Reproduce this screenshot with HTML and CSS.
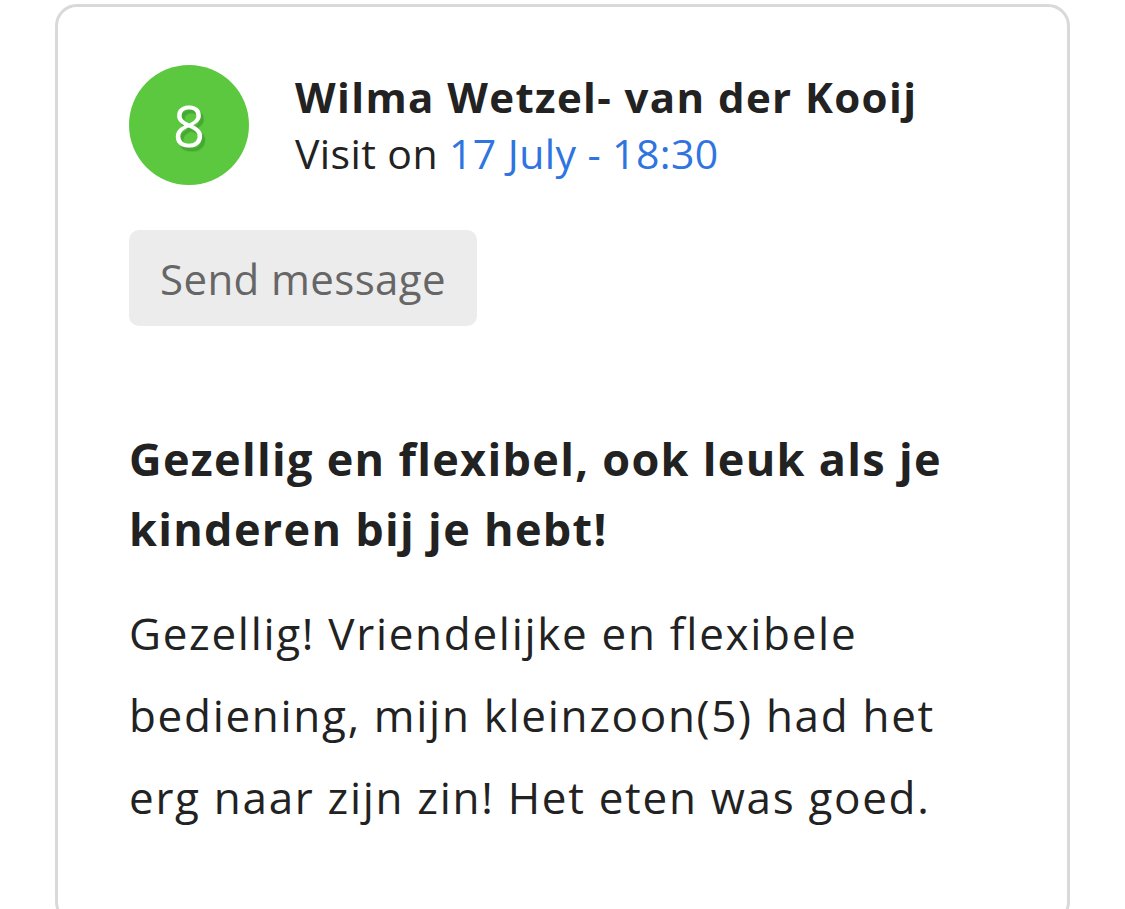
FILE: index.html
```html
<!DOCTYPE html>
<html lang="en">
<head>
    <meta charset="UTF-8">
    <meta name="viewport" content="width=device-width, initial-scale=1.0">
    <title>Review</title>
    <link rel="stylesheet" href="styles.css">
</head>
<body>
    <div class="review-card">
        <!-- Reviewer header -->
        <div class="review-header">
            <div class="score">8</div>
            <div class="reviewer">
                <div class="reviewer-name">Wilma Wetzel- van der Kooij</div>
                <div class="visit">Visit on <span class="visit-date">17 July - 18:30</span></div>
            </div>
        </div>

        <button class="message-btn">Send message</button>

        <h2 class="review-title">Gezellig en flexibel, ook leuk als je kinderen bij je hebt!</h2>
        <p class="review-text">Gezellig! Vriendelijke en flexibele bediening, mijn kleinzoon(5) had het erg naar zijn zin! Het eten was goed.</p>
    </div>
</body>
</html>
```

FILE: styles.css
```css
body {
    margin: 0;
    background-color: #fff;
    font-family: 'Open Sans', sans-serif;
    color: #222;
}
.review-card {
    width: 1015px;
    height: 920px;
    margin: 4px 0 0 55px;
    padding: 58px 0 0 71px;
    box-sizing: border-box;
    border: 3px solid #d9d9d9;
    border-radius: 22px;
}
.review-header {
    display: flex;
    align-items: center;
}
.score {
    width: 120px;
    height: 120px;
    border-radius: 50%;
    background-color: #5bc83f;
    color: #fff;
    font-size: 56px;
    line-height: 120px;
    text-align: center;
    text-shadow: 3px 4px 1px #47a833;
    flex-shrink: 0;
}
.reviewer {
    margin-left: 46px;
}
.reviewer-name {
    font-size: 42px;
    font-weight: 700;
    line-height: 57px;
    letter-spacing: 1.4px;
}
.visit {
    font-size: 41px;
    line-height: 57px;
    letter-spacing: 0.4px;
}
.visit-date {
    color: #2f74e0;
}
.message-btn {
    display: block;
    margin-top: 45px;
    width: 348px;
    height: 96px;
    border: none;
    border-radius: 10px;
    background-color: #ececec;
    color: #666;
    font-family: 'Open Sans', sans-serif;
    font-size: 42px;
    letter-spacing: 0.4px;
    cursor: pointer;
}
.review-title {
    margin: 98px 0 0;
    width: 870px;
    font-size: 45px;
    font-weight: 700;
    line-height: 70px;
    letter-spacing: 1.3px;
}
.review-text {
    margin: 28px 0 0;
    width: 870px;
    font-size: 44px;
    line-height: 82px;
    letter-spacing: 1.7px;
}
```
